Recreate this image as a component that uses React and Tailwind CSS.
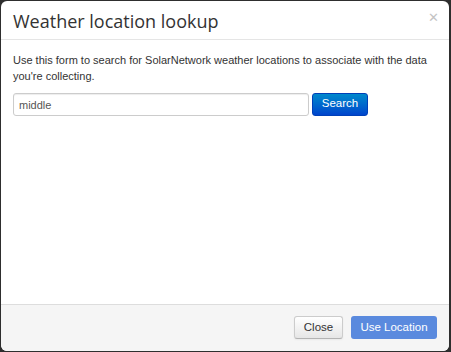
import React from "react";

export default function App() {
  return (
    <div className="w-[451px] h-[352px] bg-[#2e2e2e] pt-px pl-px overflow-hidden">
      <div className="w-[448px] h-[350px] bg-white rounded-[6px] flex flex-col overflow-hidden font-['Liberation_Sans',Arial,sans-serif] text-[#333]">
        <div className="h-[39px] flex items-center justify-between border-b border-[#e5e5e5] pl-3 pr-[10px]">
          <h3 className="font-['Open_Sans',sans-serif] text-[18px] leading-none text-[#333] mt-px">
            Weather location lookup
          </h3>
          <span className="text-[13px] text-[#c4c4c4] leading-none -mt-[5px]">✕</span>
        </div>

        <div className="flex-1 px-3 pt-[13px]">
          <p className="text-[11px] leading-[15.5px]">
            Use this form to search for SolarNetwork weather locations to associate with the data you're collecting.
          </p>
          <div className="flex items-center gap-[3px] mt-[9px]">
            <input
              type="text"
              defaultValue="middle"
              className="w-[296px] h-[23px] border border-[#ccc] rounded-[3px] px-[5px] text-[11px] text-[#555] shadow-[inset_0_1px_1px_rgba(0,0,0,0.075)] outline-none"
            />
            <button className="h-[23px] w-[56px] rounded-[3px] text-white text-[11.5px] bg-gradient-to-b from-[#0088cc] to-[#0044cc] border border-[#0040b8] -mt-[1px]">
              Search
            </button>
          </div>
        </div>

        <div className="h-[47px] bg-[#f5f5f5] border-t border-[#ddd] flex items-center justify-end gap-2 pr-[12px] pb-px">
          <button className="h-[23px] w-[49px] rounded-[3px] border border-[#ccc] border-b-[#b3b3b3] bg-gradient-to-b from-white to-[#e6e6e6] text-[11.5px] text-[#333] shadow-[0_1px_2px_rgba(0,0,0,0.05)]">
            Close
          </button>
          <button className="h-[23px] w-[86px] rounded-[3px] bg-[#5a8ade] text-white text-[11.5px]">
            Use Location
          </button>
        </div>
      </div>
    </div>
  );
}
